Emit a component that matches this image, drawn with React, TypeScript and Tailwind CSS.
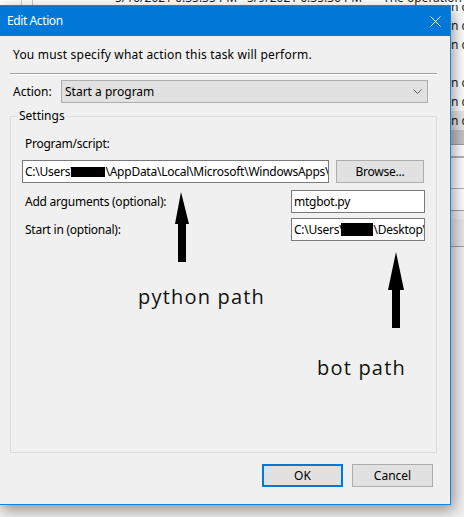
import React from 'react';

const fieldBox = 'h-[23px] border border-[#7a7a7a] bg-white pl-[2px] flex items-center overflow-hidden whitespace-nowrap';
const grayBtn = 'h-[23px] bg-[#e1e1e1] border border-[#adadad] flex items-center justify-center';

// the task scheduler window peeking out behind the dialog
const BackWindow = () => {
  const rows = ['n completed', 'n completed', 'n completed', '', 'n completed', 'n completed', 'n completed'];
  return (
    <div className="absolute inset-0 bg-[#f0f0f0] text-[#1a1a1a]">
      <div className="h-[5px] bg-white" />
      <div className="-mt-[8px] flex flex-col">
        {rows.map((r, i) => (
          <div key={i} className={`h-[19px] flex items-center pl-[451px] whitespace-nowrap ${i === 6 ? 'bg-[#e5e5e5]' : 'bg-white'}`}>
            {r}
          </div>
        ))}
        <div className="h-[15px] bg-[#c4c4c4] border-b border-[#a0a0a0]" />
        <div className="h-[13px] bg-white border-b-2 border-[#b4b4b4]" />
        <div className="h-[31px] bg-white border-b border-[#b4b4b4]" />
        <div className="h-[22px] bg-white border-b border-[#a0a0a0]" />
        <div className="h-[8px] bg-[#f0f0f0]" />
        <div className="h-[28px] bg-[#e8e8e8] border-b border-[#a0a0a0]" />
      </div>
      {/* top row, only the bottom of its glyphs shows above the dialog */}
      <div className="absolute left-0 top-0 w-full h-[5px] bg-white overflow-hidden">
        <div className="flex h-[16px] -mt-[10px] items-center whitespace-nowrap">
          <div className="w-[21px] h-full shrink-0" />
          <div className="w-[11px] h-full shrink-0 border-l border-[#c8c8c8]" />
          <div className="w-[83px] h-full shrink-0 border-l border-[#c8c8c8]" />
          <span className="w-[132px] shrink-0">5/10/2021 6:35:35 PM</span>
          <span className="w-[136px] shrink-0">5/9/2021 6:35:36 PM</span>
          <span className="shrink-0">The operation completed</span>
        </div>
      </div>
    </div>
  );
};

const EditActionDialog = () => (
  <div className="absolute left-[-1px] top-[5px] w-[452px] h-[500px] border border-[#1883d7] bg-[#f0f0f0] flex flex-col shadow-[3px_5px_14px_rgba(0,0,0,0.4)]">
    {/* title bar */}
    <div className="h-[30px] shrink-0 bg-[#0078d7] flex items-center justify-between pl-[7px] pr-[9px] text-white">
      <span className="text-[12px] leading-4 tracking-[-0.4px]">Edit Action</span>
      <svg width="11" height="11" viewBox="0 0 11 11" className="block">
        <path d="M0.5 0.5 L10.5 10.5 M10.5 0.5 L0.5 10.5" stroke="white" strokeWidth="1" />
      </svg>
    </div>

    <div className="flex flex-col pl-[10px] pr-[13px]">
      <div className="mt-[11px] pl-[3px] leading-4 tracking-[0.2px]">You must specify what action this task will perform.</div>
      <div className="mt-[10px] border-t border-[#a0a0a0] border-b border-b-white" />

      <div className="mt-[5px] flex items-center h-[23px]">
        <span className="w-[51px] pl-[3px] shrink-0">Action:</span>
        <div className="h-[23px] w-[367px] bg-[#e1e1e1] border border-[#adadad] flex items-center justify-between pl-[3px] pr-[5px]">
          <span>Start a program</span>
          <svg width="9" height="5" viewBox="0 0 9 5" className="block">
            <path d="M0.5 0.5 L4.5 4.5 L8.5 0.5" fill="none" stroke="#5f5f5f" strokeWidth="1" />
          </svg>
        </div>
      </div>

      <fieldset className="mt-[5px] h-[345px] border border-[#dcdcdc] p-0 m-0 min-w-0">
        <legend className="ml-[7px] px-[1px] leading-4">Settings</legend>
        <div className="flex flex-col px-[11px] tracking-[-0.25px]">
          <span className="mt-[12px] pl-[3px] leading-4">Program/script:</span>
          <div className="mt-[8px] flex gap-[7px]">
            <div className={`${fieldBox} w-[307px] shrink-0`}>
              <span className="shrink-0">C:\Users\</span>
              <span className="inline-block shrink-0 w-[34px] h-[10px] bg-black -ml-[3px]" />
              <span className="shrink-0">\AppData\Local\Microsoft\WindowsApps\python.exe</span>
            </div>
            <button className={`${grayBtn} w-[88px] shrink-0`}>Browse...</button>
          </div>
          <div className="mt-[7px] flex items-center justify-between">
            <span className="pl-[3px]">Add arguments (optional):</span>
            <div className={`${fieldBox} w-[134px]`}>mtgbot.py</div>
          </div>
          <div className="mt-[5px] flex items-center justify-between">
            <span className="pl-[3px]">Start in (optional):</span>
            <div className={`${fieldBox} w-[134px]`}>
              <span className="shrink-0">C:\Users\</span>
              <span className="inline-block shrink-0 w-[32px] h-[13px] bg-black -ml-[2px]" />
              <span className="shrink-0">\Desktop\</span>
            </div>
          </div>
        </div>
      </fieldset>

      <div className="mt-[11px] flex justify-end gap-[9px] pr-[4px]">
        <button className="w-[81px] h-[23px] bg-[#e1e1e1] border-2 border-[#0078d7] flex items-center justify-center">OK</button>
        <button className={`${grayBtn} w-[81px]`}>Cancel</button>
      </div>
    </div>
  </div>
);

// hand-drawn notes pasted over the screenshot
const Annotations = () => (
  <>
    <svg className="absolute inset-0 pointer-events-none" width="464" height="517">
      <polygon points="181,192 189,224 186,224 186,262 178,262 178,224 175,224" fill="black" />
      <polygon points="396,252 404,290 400,290 400,328 392,328 392,290 388,290" fill="black" />
    </svg>
    <div className="absolute left-[138px] top-[285px] font-['Open_Sans',sans-serif] text-[20px] leading-[24px] tracking-[0.06em] text-[#111]">
      python path
    </div>
    <div className="absolute left-[317px] top-[356px] font-['Open_Sans',sans-serif] text-[20px] leading-[24px] tracking-[0.06em] text-[#111]">
      bot path
    </div>
  </>
);

export default function App() {
  return (
    <div className="relative w-[464px] h-[517px] overflow-hidden bg-[#e6e6e6] font-['Segoe_UI','Noto_Sans',sans-serif] text-[12px] text-black">
      <BackWindow />
      <EditActionDialog />
      <Annotations />
    </div>
  );
}
